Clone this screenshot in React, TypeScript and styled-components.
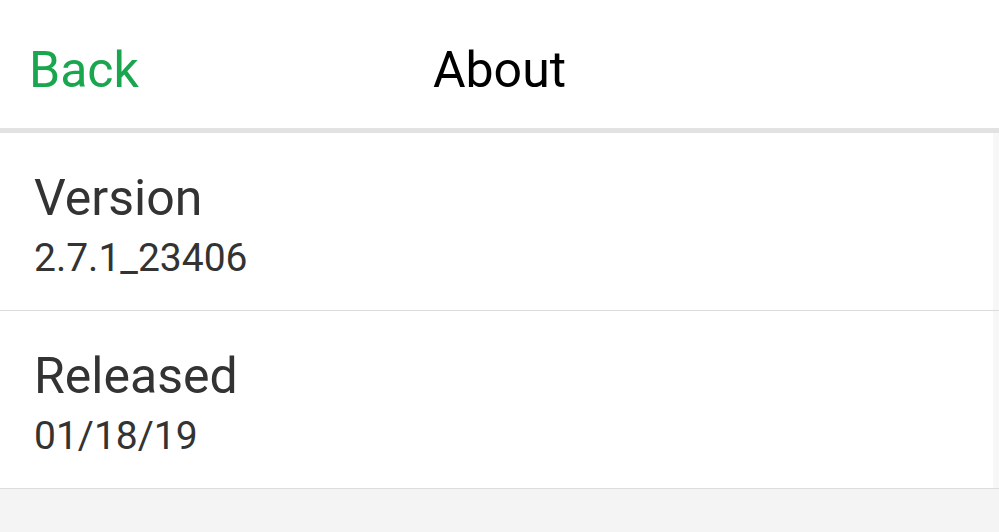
import styled, { createGlobalStyle } from 'styled-components';

const GlobalStyle = createGlobalStyle`
  html, body {
    margin: 0;
    padding: 0;
    background: #f4f4f4;
    font-family: Roboto, "Noto Sans", sans-serif;
  }
`;

const StyledPage = styled.div`
  width: 999px;
  height: 532px;
  overflow: hidden;
  background: #f4f4f4;
`;

const StyledHeader = styled.header`
  position: relative;
  height: 88px;
  padding-top: 40px;
  background: #fff;
  border-bottom: 5px solid #e2e2e2;
  display: flex;
  align-items: flex-start;
  justify-content: center;
`;

const StyledBack = styled.button`
  position: absolute;
  left: 29px;
  top: 40px;
  padding: 0;
  border: none;
  background: none;
  font-family: inherit;
  font-size: 50px;
  line-height: 60px;
  color: #19a64e;
  cursor: pointer;
`;

const StyledTitle = styled.h1`
  margin: 0;
  font-size: 50px;
  font-weight: 400;
  line-height: 60px;
  color: #000;
`;

const StyledList = styled.div`
  background: linear-gradient(to left, #f7f7f7 6px, #fff 6px);
`;

const StyledRow = styled.div`
  height: 178px;
  box-sizing: border-box;
  padding: 35px 0 0 34px;
  border-bottom: 1px solid #dcdcdc;
  display: flex;
  flex-direction: column;
  gap: 8px;
`;

const StyledLabel = styled.div`
  font-size: 50px;
  line-height: 60px;
  color: #333;
`;

const StyledValue = styled.div`
  font-size: 39px;
  line-height: 44px;
  color: #333;
`;

const items = [
  { label: 'Version', value: '2.7.1_23406' },
  { label: 'Released', value: '01/18/19' },
];

export default function App() {
  return (
    <StyledPage>
      <GlobalStyle />
      <StyledHeader>
        <StyledBack>Back</StyledBack>
        <StyledTitle>About</StyledTitle>
      </StyledHeader>
      <StyledList>
        {items.map((item) => (
          <StyledRow key={item.label}>
            <StyledLabel>{item.label}</StyledLabel>
            <StyledValue>{item.value}</StyledValue>
          </StyledRow>
        ))}
      </StyledList>
    </StyledPage>
  );
}
